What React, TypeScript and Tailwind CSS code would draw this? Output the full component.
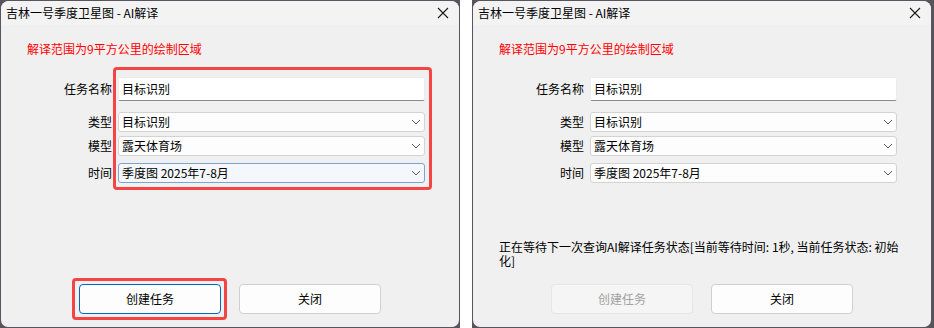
import React from "react";

function XIcon() {
  return (
    <svg width="12" height="12" viewBox="0 0 12 12">
      <path d="M1 1L11 11M11 1L1 11" stroke="#1b1b1b" strokeWidth="1.1" fill="none" />
    </svg>
  );
}

function Chevron() {
  return (
    <svg width="10" height="6" viewBox="0 0 10 6">
      <path d="M1 1l4 4 4-4" fill="none" stroke="#5f5f5f" strokeWidth="1" />
    </svg>
  );
}

function Select({ text, focused }: { text: React.ReactNode; focused?: boolean }) {
  return (
    <div
      className={
        focused
          ? "ml-[6px] flex h-[20px] w-[307px] items-center justify-between rounded-[3px] border border-[#7ba4d5] bg-[#f4f8fc] pl-[3px] pr-[3px]"
          : "ml-[6px] flex h-[20px] w-[307px] items-center justify-between rounded-[3px] border border-[#d3d3d3] bg-[#fdfdfd] pl-[3px] pr-[3px]"
      }
    >
      <span className="leading-[18px]">{text}</span>
      <Chevron />
    </div>
  );
}

function Label({ children }: { children: React.ReactNode }) {
  return <div className="w-[85px] text-right leading-[16px]">{children}</div>;
}

function Dialog({ running }: { running?: boolean }) {
  return (
    <div className="flex h-full w-[458px] flex-col overflow-hidden rounded-t-[8px] rounded-b-[7px] bg-[#f0f0f0]">
      <div className="flex h-[24px] shrink-0 items-center justify-between bg-[#f3f3f3] pl-[5px] pr-[10px]">
        <span className="leading-[16px]">吉林一号季度卫星图 - AI解译</span>
        <XIcon />
      </div>
      <div className="flex flex-1 flex-col pl-[26px]">
        <p className="mt-[16px] leading-[16px] text-[#ff0000]">解译范围为9平方公里的绘制区域</p>
        <div className="mt-[20px] flex flex-col">
          <div className="flex items-center">
            <Label>任务名称</Label>
            <div className="ml-[6px] flex h-[24px] w-[307px] items-center rounded-[2px] border border-[#ececec] border-b-[#8a8a8a] bg-white pl-[3px]">
              <span className="leading-[16px]">目标识别</span>
            </div>
          </div>
          <div className="mt-[11px] flex items-center">
            <Label>类型</Label>
            <Select text="目标识别" />
          </div>
          <div className="mt-[4px] flex items-center">
            <Label>模型</Label>
            <Select text="露天体育场" />
          </div>
          <div className="mt-[7px] flex items-center">
            <Label>时间</Label>
            <Select text="季度图 2025年7-8月" focused={!running} />
          </div>
        </div>
        <div className="flex-1" />
        {running && (
          <div className="mb-[16px] leading-[14px]">
            <div className="whitespace-nowrap">正在等待下一次查询AI解译任务状态[当前等待时间: 1秒, 当前任务状态: 初始</div>
            <div className="whitespace-nowrap">化]</div>
          </div>
        )}
      </div>
      <div className="flex shrink-0 justify-center gap-[18px] pb-[13px]">
        {running ? (
          <div className="flex h-[30px] w-[142px] items-center justify-center rounded-[4px] border border-[#e6e6e6] bg-[#f5f5f5] text-[#a2a2a2]">
            创建任务
          </div>
        ) : (
          <div className="flex h-[30px] w-[142px] items-center justify-center rounded-[4px] border border-[#0067c0] bg-[#fdfdfd]">
            创建任务
          </div>
        )}
        <div className="flex h-[30px] w-[142px] items-center justify-center rounded-[4px] border border-[#d0d0d0] bg-[#fdfdfd]">
          关闭
        </div>
      </div>
    </div>
  );
}

export default function App() {
  return (
    <div className="relative flex h-[328px] w-[934px] bg-white font-['Noto_Sans_CJK_SC','Noto_Sans',sans-serif] text-[12px] text-black">
      <div className="flex h-full w-[460px] bg-[#58545c] p-[1px]">
        <Dialog />
      </div>
      <div className="ml-[12px] flex h-full w-[462px] bg-[#58545c] py-[1px] pl-[1px] pr-[3px]">
        <Dialog running />
      </div>
      <div className="absolute left-[113px] top-[67px] h-[123px] w-[319px] rounded-[4px] border-[3px] border-[#f44444]" />
      <div className="absolute left-[72px] top-[278px] h-[42px] w-[155px] rounded-[4px] border-[3px] border-[#f44444]" />
    </div>
  );
}
